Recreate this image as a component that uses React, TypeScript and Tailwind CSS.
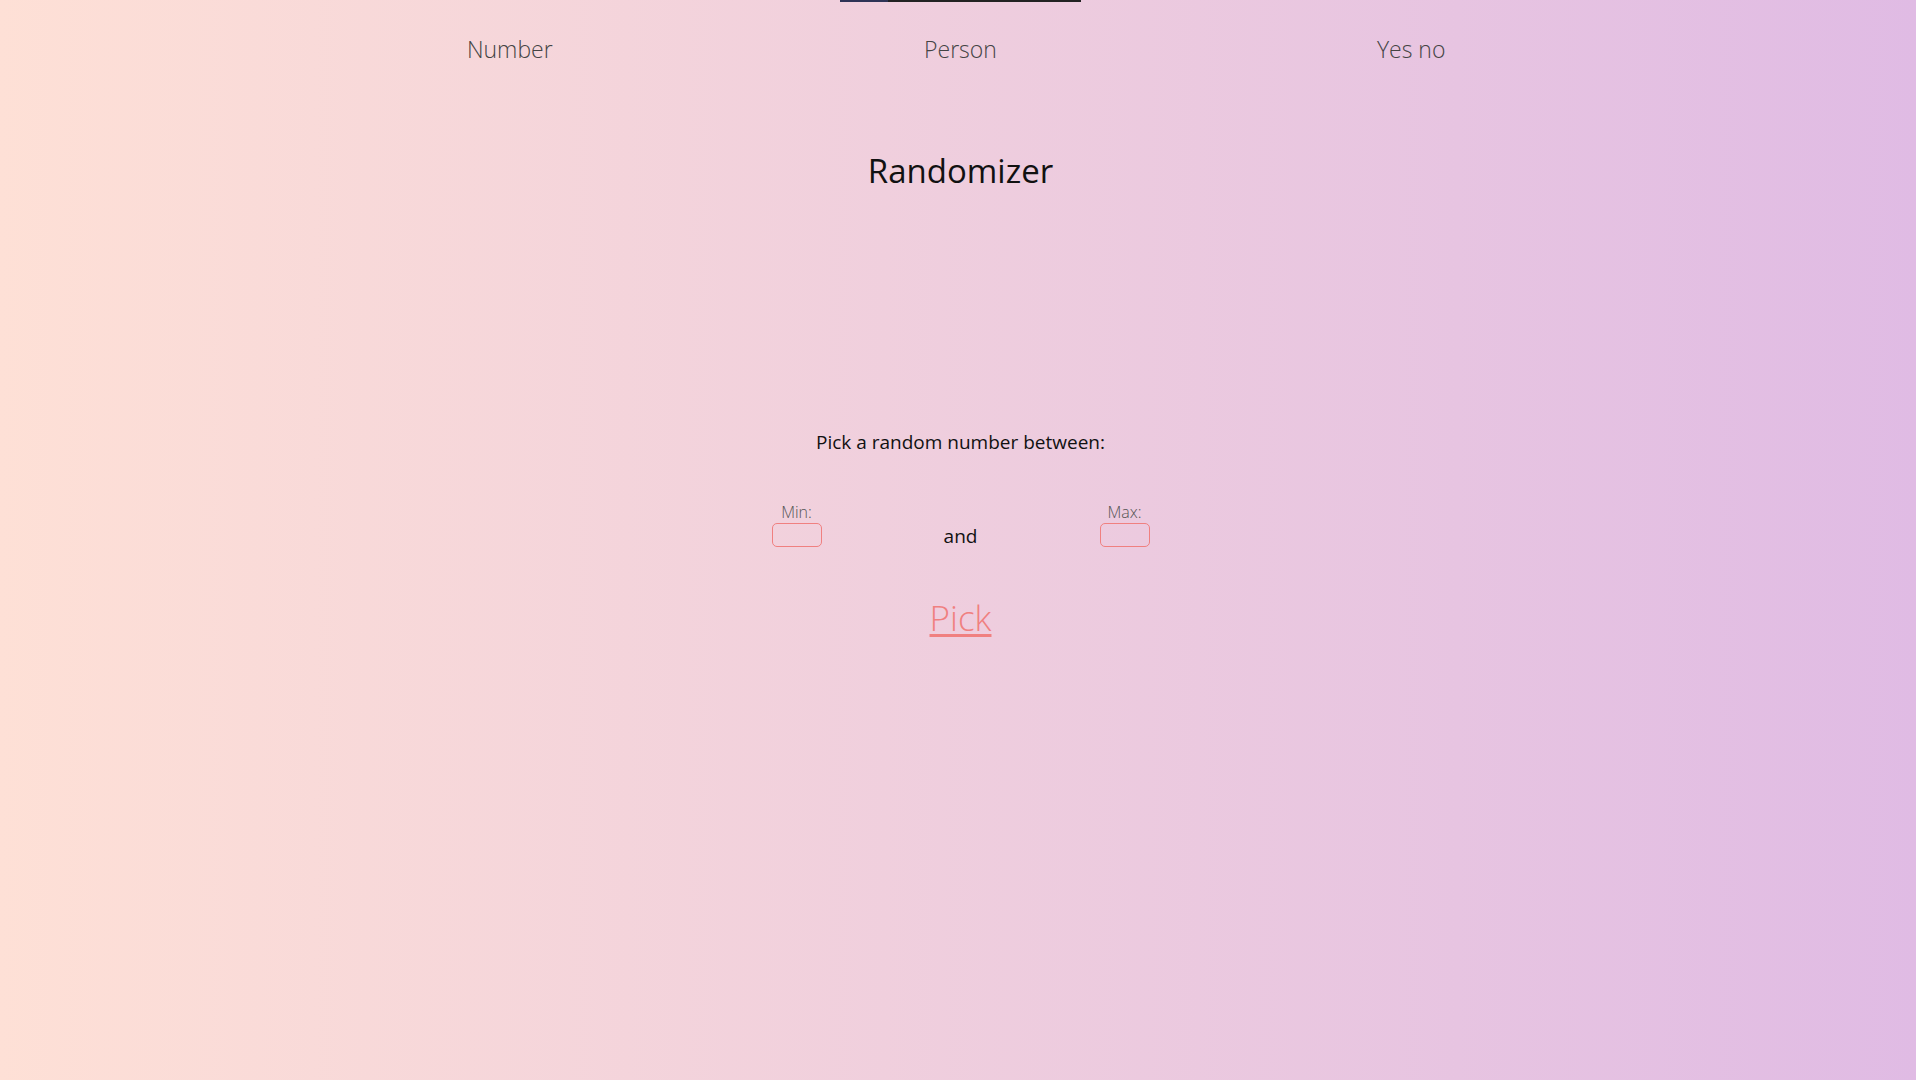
import React from "react";

export default function App() {
  return (
    <div
      className="min-h-screen w-full bg-gradient-to-r from-[#fee0d6] to-[#e0bbe4] pl-[5px] text-[#111]"
      style={{ fontFamily: '"Open Sans", "Noto Sans", sans-serif' }}
    >
      <div className="flex justify-center">
        <div className="flex h-[2px] w-[241px]">
          <div className="w-[48px] bg-[#2e3356]" />
          <div className="flex-1 bg-[#222]" />
        </div>
      </div>
      <nav className="mx-auto grid w-[1352px] grid-cols-3 pt-[31px] text-[23px] font-light leading-[32px] text-[#444]">
        <a className="text-center">Number</a>
        <a className="text-center">Person</a>
        <a className="text-center">Yes no</a>
      </nav>
      <h1 className="mt-[86px] text-center text-[33px] leading-[40px] font-normal">Randomizer</h1>
      <p className="mt-[237px] text-center text-[19px] leading-[28px]">Pick a random number between:</p>
      <div className="mx-auto mt-[46px] grid w-[492px] grid-cols-3 items-end">
        <div className="flex flex-col items-center">
          <label className="text-[16px] font-light leading-[20px] text-[#555]">Min:</label>
          <input className="mt-[1px] h-[24px] w-[50px] rounded-[5px] border border-[#f08080] bg-transparent outline-none" />
        </div>
        <div className="pb-[1px] text-center text-[19px] leading-[24px]">
          <span className="relative top-[2px]">and</span>
        </div>
        <div className="flex flex-col items-center">
          <label className="text-[16px] font-light leading-[20px] text-[#555]">Max:</label>
          <input className="mt-[1px] h-[24px] w-[50px] rounded-[5px] border border-[#f08080] bg-transparent outline-none" />
        </div>
      </div>
      <div className="mt-[49px] flex justify-center">
        <a className="text-[35px] font-light leading-[44px] text-[#f08080] underline decoration-[3px] underline-offset-[3px]">Pick</a>
      </div>
    </div>
  );
}
